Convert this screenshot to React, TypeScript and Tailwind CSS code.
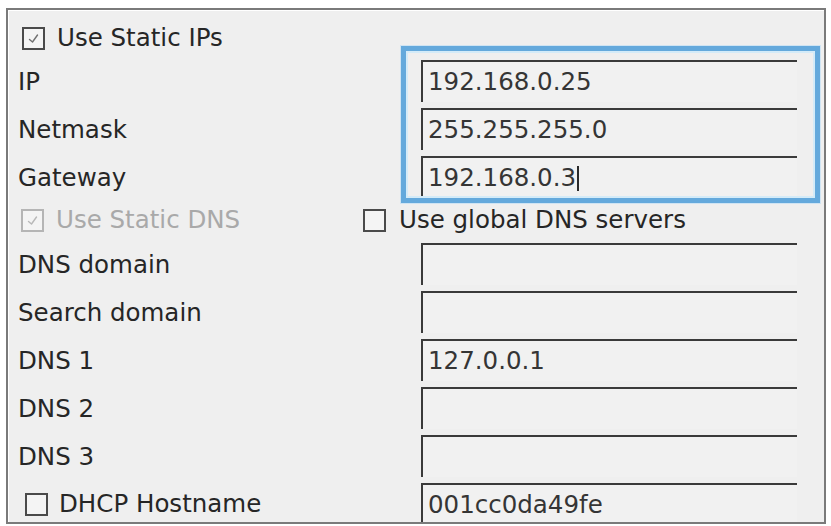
import React from "react";

type CheckProps = { checked?: boolean; disabled?: boolean };

function CheckBox({ checked, disabled }: CheckProps) {
  return (
    <span
      className={
        "flex h-[23px] w-[23px] shrink-0 items-center justify-center border-2 bg-[#f4f4f4] " +
        (disabled ? "border-[#b5b5b5]" : "border-[#4a4a4a]")
      }
    >
      {checked && (
        <svg width="15" height="15" viewBox="0 0 15 15" fill="none">
          <path
            d="M3.5 8.5 L6.5 11 L11.5 4"
            stroke={disabled ? "#b8b8b8" : "#707070"}
            strokeWidth="1.4"
            strokeLinecap="round"
            strokeLinejoin="round"
          />
        </svg>
      )}
    </span>
  );
}

function Field({ value, cursor }: { value?: string; cursor?: boolean }) {
  return (
    <div className="flex h-[42px] w-[376px] items-center border-t-2 border-l-2 border-[#3a3a3a] bg-[#f1f1f1] pl-[5px] text-[24.5px] text-[#353535]">
      <span>{value}</span>
      {cursor && <span className="ml-[1px] h-[25px] w-[2px] bg-[#2a2a2a]" />}
    </div>
  );
}

function FieldRow({ label, value, cursor }: { label: string; value?: string; cursor?: boolean }) {
  return (
    <div className="grid h-[48px] grid-cols-[413px_376px]">
      <div className="flex h-[42px] items-center pl-[10px] pt-[2px] text-[24.5px] text-[#262626]">{label}</div>
      <Field value={value} cursor={cursor} />
    </div>
  );
}

export default function App() {
  return (
    <div
      className="min-h-screen bg-white pl-[6px] pt-[8px]"
      style={{ fontFamily: '"DejaVu Sans", Verdana, sans-serif' }}
    >
      <div className="relative h-[516px] w-[820px] overflow-hidden border-2 border-[#7a7a7a] bg-[#efefef] shadow-[inset_1px_1px_0_#ffffff]">
        <div className="flex h-[50px] items-center gap-[12px] pl-[14px] pt-[6px] text-[24.5px] text-[#262626]">
          <CheckBox checked />
          <span>Use Static IPs</span>
        </div>

        <FieldRow label="IP" value="192.168.0.25" />
        <FieldRow label="Netmask" value="255.255.255.0" />
        <FieldRow label="Gateway" value="192.168.0.3" cursor />

        <div className="flex h-[39px] items-center pb-[6px] text-[24.5px]">
          <div className="flex w-[355px] items-center gap-[12px] pl-[13px] text-[#a9a9a9]">
            <CheckBox checked disabled />
            <span>Use Static DNS</span>
          </div>
          <div className="flex items-center gap-[13px] text-[#262626]">
            <CheckBox />
            <span>Use global DNS servers</span>
          </div>
        </div>

        <FieldRow label="DNS domain" />
        <FieldRow label="Search domain" />
        <FieldRow label="DNS 1" value="127.0.0.1" />
        <FieldRow label="DNS 2" />
        <FieldRow label="DNS 3" />

        <div className="grid h-[48px] grid-cols-[413px_376px]">
          <div className="flex h-[42px] items-center gap-[11px] pl-[17px] text-[24.5px] text-[#262626]">
            <CheckBox />
            <span>DHCP Hostname</span>
          </div>
          <Field value="001cc0da49fe" />
        </div>

        {/* highlight drawn over the static IP fields */}
        <div className="pointer-events-none absolute left-[393px] top-[36px] h-[157px] w-[419px] border-[5px] border-[#64a9dc] shadow-[inset_0_0_0_2px_#d4ebf8,0_0_0_1px_#cfe4f3]" />
      </div>
    </div>
  );
}
